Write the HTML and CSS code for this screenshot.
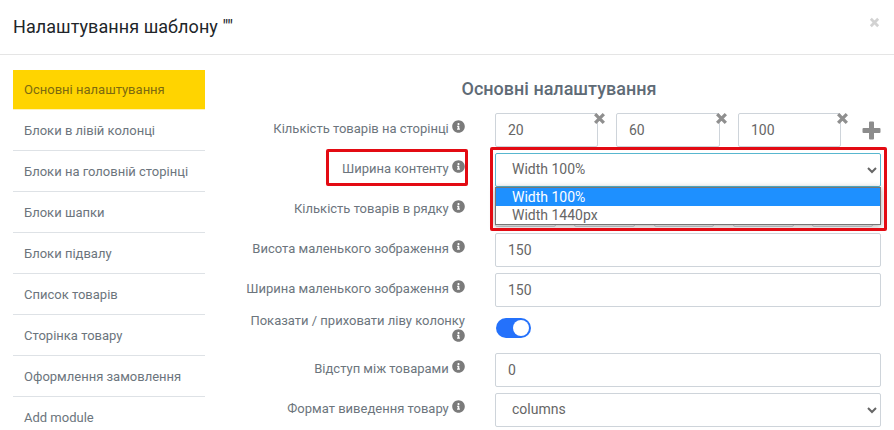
FILE: index.html
```html
<!DOCTYPE html>
<html lang="uk">
<head>
<meta charset="utf-8">
<title>Налаштування шаблону</title>
<link rel="stylesheet" href="styles.css">
</head>
<body>
<svg class="defs" aria-hidden="true">
  <symbol id="info" viewBox="0 0 512 512"><path d="M256 8C119.043 8 8 119.083 8 256c0 136.997 111.043 248 248 248s248-111.003 248-248C504 119.083 392.957 8 256 8zm0 110c23.196 0 42 18.804 42 42s-18.804 42-42 42-42-18.804-42-42 18.804-42 42-42zm56 254c0 6.627-5.373 12-12 12h-88c-6.627 0-12-5.373-12-12v-24c0-6.627 5.373-12 12-12h12v-64h-12c-6.627 0-12-5.373-12-12v-24c0-6.627 5.373-12 12-12h64c6.627 0 12 5.373 12 12v100h12c6.627 0 12 5.373 12 12v24z"/></symbol>
  <symbol id="times" viewBox="0 0 12 12"><path d="M2 2l8 8M10 2l-8 8" fill="none" stroke="currentColor" stroke-width="3"/></symbol>
</svg>
<div class="modal">
  <header class="modal-head">
    <h1 class="modal-title">Налаштування шаблону ""</h1>
    <svg class="modal-close"><use href="#times"/></svg>
  </header>
  <div class="modal-body">
    <nav class="side">
      <a class="side-item is-active">Основні налаштування</a>
      <a class="side-item">Блоки в лівій колонці</a>
      <a class="side-item">Блоки на головній сторінці</a>
      <a class="side-item">Блоки шапки</a>
      <a class="side-item">Блоки підвалу</a>
      <a class="side-item">Список товарів</a>
      <a class="side-item">Сторінка товару</a>
      <a class="side-item">Оформлення замовлення</a>
      <a class="side-item">Add module</a>
    </nav>
    <main class="main">
      <h2 class="section-title">Основні налаштування</h2>
      <div class="form">
        <label class="label">Кількість товарів на сторінці <svg class="info"><use href="#info"/></svg></label>
        <div class="multi">
          <div class="chip"><input class="input" value="20"><svg class="chip-x"><use href="#times"/></svg></div>
          <div class="chip chip-wide"><input class="input" value="60"><svg class="chip-x"><use href="#times"/></svg></div>
          <div class="chip"><input class="input" value="100"><svg class="chip-x"><use href="#times"/></svg></div>
          <svg class="plus" viewBox="0 0 19 19"><path d="M7 1.5a1 1 0 0 1 1-1h3a1 1 0 0 1 1 1V7h5.500a1 1 0 0 1 1 1v3a1 1 0 0 1-1 1H12v5.500a1 1 0 0 1-1 1H8a1 1 0 0 1-1-1V12H1.500a1 1 0 0 1-1-1V8a1 1 0 0 1 1-1H7z"/></svg>
        </div>

        <label class="label label-marked">Ширина контенту <svg class="info"><use href="#info"/></svg><span class="mark mark-label"></span></label>
        <div class="field-open">
          <select class="input select is-focus"><option>Width 100%</option><option>Width 1440px</option></select>
          <div class="listbox">
            <div class="option is-selected">Width 100%</div>
            <div class="option">Width 1440px</div>
          </div>
          <span class="mark mark-field"></span>
        </div>

        <label class="label">Кількість товарів в рядку <svg class="info"><use href="#info"/></svg></label>
        <div class="five">
          <input class="input"><input class="input"><input class="input"><input class="input"><input class="input">
        </div>

        <label class="label">Висота маленького зображення <svg class="info"><use href="#info"/></svg></label>
        <input class="input" value="150">

        <label class="label">Ширина маленького зображення <svg class="info"><use href="#info"/></svg></label>
        <input class="input" value="150">

        <label class="label label-wrap">Показати / приховати ліву колонку <svg class="info"><use href="#info"/></svg></label>
        <div class="toggle-cell"><span class="toggle"><span class="knob"></span></span></div>

        <label class="label">Відступ між товарами <svg class="info"><use href="#info"/></svg></label>
        <input class="input" value="0">

        <label class="label">Формат виведення товару <svg class="info"><use href="#info"/></svg></label>
        <select class="input select"><option>columns</option></select>
      </div>
    </main>
  </div>
</div>
</body>
</html>
```
FILE: styles.css
```css
* { box-sizing: border-box; }
html, body { margin: 0; height: 430px; overflow: hidden; background: #fff; }
body { font-family: Roboto, "Liberation Sans", sans-serif; color: #6c757d; font-size: 13px; }
.defs { display: none; }

.modal-head {
  height: 55px;
  border-bottom: 1px solid #e5e5e5;
  padding: 0 14px 0 13px;
  display: flex;
  align-items: center;
  justify-content: space-between;
}
.modal-title { margin: 0 0 2px; font-size: 18px; font-weight: 400; letter-spacing: .06px; color: #212529; }
.modal-close { width: 11px; height: 11px; color: #d2d2d2; margin-top: -10px; }

.modal-body { display: flex; padding: 15px 13px 0; }

.side { width: 192px; flex: none; display: flex; flex-direction: column; }
.side-item {
  display: block;
  height: 41px;
  padding: 0 11px;
  line-height: 41px;
  color: #6c757d;
  border-bottom: 1px solid #dee2e6;
}
.side-item:last-child { border-bottom: 0; }
.side-item.is-active { height: 40px; line-height: 39px; background: #ffd400; border-bottom-color: #fff3b8; color: #7c6a10; }

.main { flex: 1; margin-left: 32px; min-width: 0; }
.section-title { margin: 0; height: 43px; padding-top: 9px; text-align: center; font-size: 18px; line-height: 20px; font-weight: 500; color: #5f6b76; }

.form { display: grid; grid-template-columns: 228px 386px; column-gap: 30px; row-gap: 6px; grid-auto-rows: 34px; }

.label { text-align: right; padding-top: 7px; line-height: 16px; position: relative; color: #6c757d; white-space: normal; }
.label-wrap { padding-top: 0; }
.info { width: 13px; height: 13px; fill: #7b7b7b; vertical-align: -.5px; }

.input {
  display: block;
  width: 100%;
  height: 34px;
  border: 1px solid #ced4da;
  border-radius: 2px;
  background: #fff;
  padding: 0 12px;
  font: 14px Roboto, "Liberation Sans", sans-serif;
  color: #666;
  outline: 0;
}
.select { padding: 0 12px 2px; }
.is-focus { border-color: #58b7cf; }

.multi { display: flex; align-items: flex-start; gap: 18px; }
.chip { position: relative; width: 103px; flex: none; }
.chip-wide { width: 104px; }
.chip-x { position: absolute; right: -8px; top: -1px; width: 13px; height: 13px; color: #8f8f8f; }
.plus { width: 19px; height: 19px; fill: #8c8c8c; margin: 8px 0 0 3px; flex: none; }

.five { display: flex; gap: 18.500px; width: 378px; }

.field-open { position: relative; }
.listbox {
  position: absolute;
  left: 0;
  right: 0;
  top: 34px;
  height: 38px;
  border: 1px solid #767676;
  background: #fff;
  box-shadow: 0 1px 6px rgba(0, 0, 0, .35);
  font-size: 14px;
  z-index: 2;
}
.option { height: 18px; line-height: 18px; padding-left: 16px; color: #666; }
.option.is-selected { background: #1e90ff; color: #fff; }

.mark { position: absolute; border: 3px solid #e30b13; border-radius: 2px; z-index: 3; pointer-events: none; }
.mark-label { left: 89px; right: -3px; top: -4px; height: 37px; }
.mark-field { left: -5px; right: -6px; top: -6px; height: 84px; }

.toggle-cell { display: flex; align-items: flex-start; padding: 5px 0 0 1px; }
.toggle { display: block; width: 35px; height: 20px; border-radius: 10px; background: #2471fb; position: relative; }
.knob { position: absolute; right: 2px; top: 2px; width: 16px; height: 16px; border-radius: 50%; background: #fff; }
```
